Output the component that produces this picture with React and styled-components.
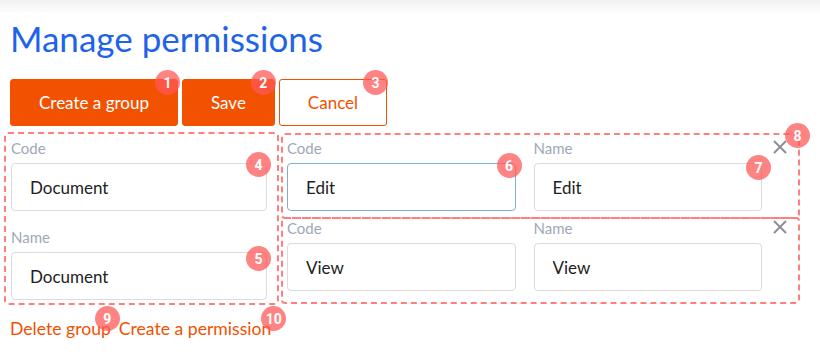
import styled, { createGlobalStyle } from "styled-components";

const ORANGE = "#f25100";
const DASH = "#ff7f7f";

const GlobalStyle = createGlobalStyle`
  body {
    margin: 0;
    background: #fff;
    font-family: Lato, "Liberation Sans", sans-serif;
  }
  * { box-sizing: border-box; }
`;

const Shade = styled.div`
  height: 14px;
  background: linear-gradient(#f1f1f1, #fff);
`;

const Page = styled.div`
  padding: 0 10px;
`;

const Title = styled.h1`
  margin: 4px 0 0;
  font-size: 35px;
  font-weight: 400;
  line-height: 41px;
  color: #1f63e8;
`;

const Toolbar = styled.div`
  display: flex;
  gap: 4px;
  margin-top: 20px;
`;

const Button = styled.button`
  position: relative;
  height: 47px;
  padding: 0 28px;
  border: 1px solid ${ORANGE};
  border-radius: 3px;
  background: ${(p) => (p.$outline ? "#fff" : ORANGE)};
  color: ${(p) => (p.$outline ? ORANGE : "#fff")};
  font-family: Lato, "Liberation Sans", sans-serif;
  font-size: 17px;
  cursor: pointer;
`;

const Badge = styled.span`
  position: absolute;
  top: ${(p) => p.$top ?? -10}px;
  right: ${(p) => p.$right ?? -2}px;
  width: 25px;
  height: 25px;
  border-radius: 50%;
  background: rgba(255, 88, 88, 0.74);
  color: #fff;
  font-family: Roboto, "Liberation Sans", sans-serif;
  font-size: 14px;
  font-weight: 700;
  line-height: 1;
  display: flex;
  align-items: center;
  justify-content: center;
  pointer-events: none;
  z-index: 2;
`;

const Editor = styled.div`
  display: flex;
  align-items: flex-start;
  gap: 2px;
  margin: 6px 0 0 -6px;
`;

const GroupBox = styled.div`
  width: 275px;
  display: flex;
  flex-direction: column;
  gap: 18px;
  padding: 6px 10px 3px 5px;
  border: 2px dashed ${DASH};
  border-radius: 4px;
`;

const Field = styled.div`
  flex: 1;
  min-width: 0;
`;

const Label = styled.div`
  font-size: 15px;
  line-height: 17px;
  color: #9ea8b8;
  margin-bottom: 6px;
`;

const InputWrap = styled.div`
  position: relative;
`;

const Input = styled.input`
  display: block;
  width: 100%;
  height: 48px;
  padding: 0 18px;
  border: 1px solid ${(p) => (p.$focused ? "#7fafd6" : "#dcdcdc")};
  border-radius: 4px;
  background: #fff;
  color: #222;
  font-family: Lato, "Liberation Sans", sans-serif;
  font-size: 17px;
  outline: none;
`;

const Permissions = styled.div`
  width: 519px;
  margin-top: 1px;
  display: flex;
  flex-direction: column;
`;

const PermissionRow = styled.div`
  position: relative;
  display: flex;
  padding: ${(p) => p.$padTop}px 0 ${(p) => p.$padBottom}px 4px;
  border: 2px dashed ${DASH};
  border-radius: 4px;
  & + & {
    margin-top: -2px;
  }
`;

const Fields = styled.div`
  flex: 1;
  display: flex;
  gap: 18px;
`;

const Close = styled.button`
  width: 36px;
  height: 14px;
  padding: 0;
  border: none;
  background: none;
  display: flex;
  justify-content: center;
  cursor: pointer;
`;

const Links = styled.div`
  display: flex;
  gap: 8px;
  margin-top: 14px;
`;

const LinkButton = styled.button`
  position: relative;
  padding: 0;
  border: none;
  background: none;
  color: ${ORANGE};
  font-family: Lato, "Liberation Sans", sans-serif;
  font-size: 17.6px;
  line-height: 20px;
  cursor: pointer;
`;

function XIcon() {
  return (
    <svg width="14" height="14" viewBox="0 0 14 14">
      <path d="M1 1L13 13M13 1L1 13" stroke="#8b9098" strokeWidth="2" />
    </svg>
  );
}

function TextField({ label, value, badge, badgeTop, badgeRight, focused }) {
  return (
    <Field>
      <Label>{label}</Label>
      <InputWrap>
        <Input defaultValue={value} $focused={focused} />
        {badge && (
          <Badge $top={badgeTop} $right={badgeRight}>
            {badge}
          </Badge>
        )}
      </InputWrap>
    </Field>
  );
}

const permissions = [
  { code: "Edit", name: "Edit", padTop: 5, padBottom: 6, badges: [6, 7, 8] },
  { code: "View", name: "View", padTop: 1, padBottom: 11, badges: [] },
];

export default function App() {
  return (
    <>
      <GlobalStyle />
      <Shade />
      <Page>
        <Title>Manage permissions</Title>
        <Toolbar>
          <Button>
            Create a group<Badge $right={-3}>1</Badge>
          </Button>
          <Button>
            Save<Badge>2</Badge>
          </Button>
          <Button $outline>
            Cancel<Badge>3</Badge>
          </Button>
        </Toolbar>

        <Editor>
          <GroupBox>
            <TextField label="Code" value="Document" badge="4" badgeTop={-11} badgeRight={-4} />
            <TextField label="Name" value="Document" badge="5" badgeTop={-6} badgeRight={-4} />
          </GroupBox>

          <Permissions>
            {permissions.map((perm, i) => (
              <PermissionRow key={perm.code} $padTop={perm.padTop} $padBottom={perm.padBottom}>
                <Fields>
                  <TextField
                    label="Code"
                    value={perm.code}
                    focused={i === 0}
                    badge={perm.badges[0]}
                    badgeTop={-10}
                    badgeRight={-6}
                  />
                  <TextField
                    label="Name"
                    value={perm.name}
                    badge={perm.badges[1]}
                    badgeTop={-8}
                    badgeRight={-9}
                  />
                </Fields>
                <Close>
                  <XIcon />
                </Close>
                {perm.badges[2] && (
                  <Badge $top={-12} $right={-12}>
                    {perm.badges[2]}
                  </Badge>
                )}
              </PermissionRow>
            ))}
          </Permissions>
        </Editor>

        <Links>
          <LinkButton>
            Delete group<Badge $top={-13} $right={-9}>9</Badge>
          </LinkButton>
          <LinkButton>
            Create a permission<Badge $top={-13} $right={-15}>10</Badge>
          </LinkButton>
        </Links>
      </Page>
    </>
  );
}
